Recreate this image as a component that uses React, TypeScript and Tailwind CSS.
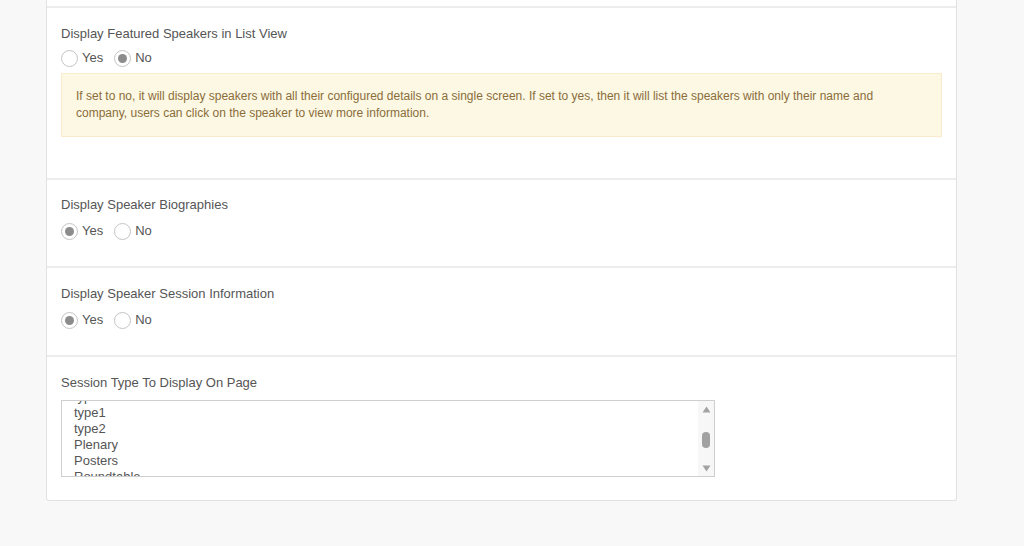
import React from "react";

const SESSION_TYPES = ["type", "type1", "type2", "Plenary", "Posters", "Roundtable", "Workshop"];

function Radio({ label, checked }: { label: string; checked?: boolean }) {
  return (
    <label className="flex items-center gap-[4px]">
      <span className="flex h-[17px] w-[17px] items-center justify-center rounded-full border border-[#c4c4c4] bg-white">
        {checked && <span className="h-[9px] w-[9px] rounded-full bg-[#8c8c8c]" />}
      </span>
      <span className="text-[13px] text-[#555]">{label}</span>
    </label>
  );
}

function YesNo({ value }: { value: "yes" | "no" }) {
  return (
    <div className="flex h-[18px] items-center gap-[11px]">
      <Radio label="Yes" checked={value === "yes"} />
      <Radio label="No" checked={value === "no"} />
    </div>
  );
}

export default function App() {
  return (
    <div
      className="min-h-[546px] w-full bg-[#f8f8f8] pl-[46px]"
      style={{ fontFamily: '"Liberation Sans", Arial, sans-serif' }}
    >
      <div className="w-[911px] rounded-b-[3px] border-x border-b border-[#e2e2e2] bg-white">
        <div className="h-[6px]" />

        {/* Featured speakers */}
        <section className="border-t-2 border-[#ececec] px-[14px] pt-[16px] pb-[41px]">
          <div className="h-[20px] text-[13px] leading-[20px] text-[#555]">
            Display Featured Speakers in List View
          </div>
          <div className="mt-[5px]">
            <YesNo value="no" />
          </div>
          <div className="mt-[6px] h-[64px] border border-[#faebcc] bg-[#fcf8e3] px-[14px] py-[14px] text-[12px] leading-[17px] text-[#8a6d3b]">
            If set to no, it will display speakers with all their configured details on a single screen. If set to
            yes, then it will list the speakers with only their name and company, users can click on the speaker to
            view more information.
          </div>
        </section>

        {/* Biographies */}
        <section className="border-t-2 border-[#ececec] px-[14px] pt-[15px] pb-[26px]">
          <div className="h-[20px] text-[13px] leading-[20px] text-[#555]">Display Speaker Biographies</div>
          <div className="mt-[7px]">
            <YesNo value="yes" />
          </div>
        </section>

        {/* Session info */}
        <section className="border-t-2 border-[#ececec] px-[14px] pt-[16px] pb-[26px]">
          <div className="h-[20px] text-[13px] leading-[20px] text-[#555]">Display Speaker Session Information</div>
          <div className="mt-[7px]">
            <YesNo value="yes" />
          </div>
        </section>

        {/* Session types */}
        <section className="border-t-2 border-[#ececec] px-[14px] pt-[16px] pb-[23px]">
          <div className="h-[20px] text-[13px] leading-[20px] text-[#555]">Session Type To Display On Page</div>
          <div className="mt-[7px] flex h-[77px] w-[654px] overflow-hidden border border-[#cfcfcf] bg-white">
            <div className="flex-1 overflow-hidden pl-[12px]">
              <div className="-mt-[12px]">
                {SESSION_TYPES.map((t) => (
                  <div key={t} className="h-[16px] text-[13px] leading-[16px] text-[#555]">
                    {t}
                  </div>
                ))}
              </div>
            </div>
            <div className="relative w-[16px] bg-[#f7f7f7]">
              <svg className="absolute left-[4px] top-[5px]" width="9" height="7" viewBox="0 0 9 7">
                <path d="M4.5 0.5 L8.5 6.5 L0.5 6.5 Z" fill="#a3a3a3" />
              </svg>
              <div className="absolute left-[4px] top-[31px] h-[16px] w-[8px] rounded-full bg-[#a1a1a1]" />
              <svg className="absolute left-[4px] top-[64px]" width="9" height="7" viewBox="0 0 9 7">
                <path d="M0.5 0.5 L8.5 0.5 L4.5 6.5 Z" fill="#a3a3a3" />
              </svg>
            </div>
          </div>
        </section>
      </div>
    </div>
  );
}
